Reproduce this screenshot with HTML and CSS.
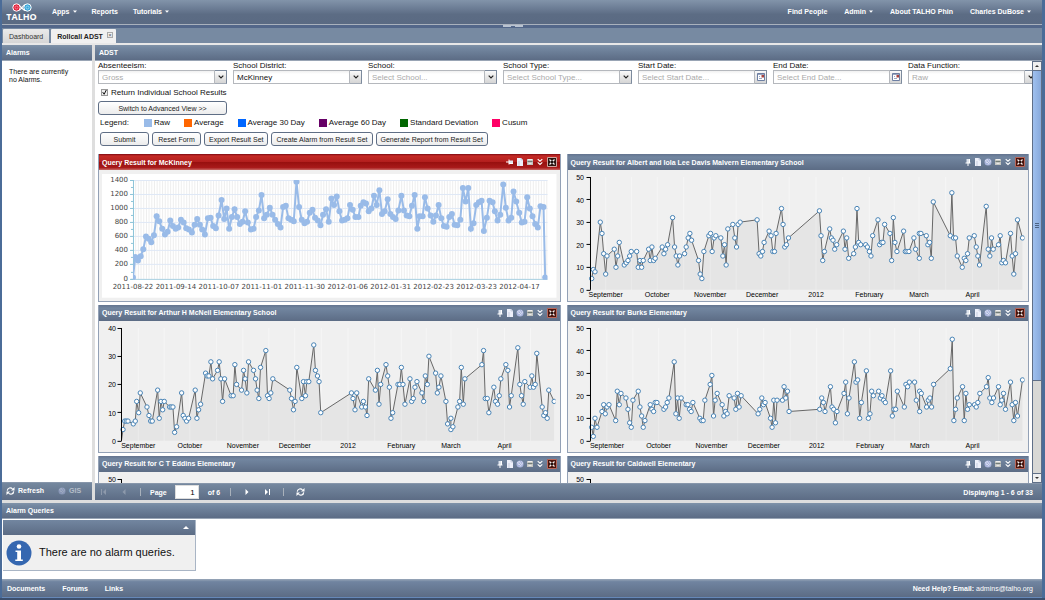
FILE: index.html
```html
<!DOCTYPE html>
<html lang="en">
<head>
<meta charset="utf-8">
<title>TALHO - Rollcall ADST</title>
<link rel="stylesheet" href="styles.css">
</head>
<body>
<svg class="symbols" aria-hidden="true">
  <symbol id="i-pin" viewBox="0 0 8 8"><path d="M2.5 1h3v4h-3z" fill="#dfe5ee"/><path d="M1.500 5h5M4 5v3M5.500 1v4" stroke="#fff" fill="none"/></symbol>
  <symbol id="i-doc" viewBox="0 0 8 8"><path d="M1 0h4l2 2v6H1z" fill="#edf0fa"/><path d="M5 0v2h2M3 3v5" stroke="#b9c2d6" stroke-width=".7" fill="none"/></symbol>
  <symbol id="i-globe" viewBox="0 0 8 8"><circle cx="4" cy="4" r="3.500" fill="#a9b4dc"/><path d="M1.500 2.500l2-1 1 2-1.500 1.500zM5 4.500l2-1M4 6.500l1-1.500M5.500 1.500l1 1" stroke="#e4e8f6" stroke-width=".8" fill="none"/></symbol>
  <symbol id="i-print" viewBox="0 0 8 8"><path d="M1 1h6v6H1z" fill="#c4c6c2"/><path d="M1.500 3.500h5" stroke="#727d78"/><path d="M2.500 5.500h3" stroke="#e8e8e8"/><path d="M2 1.500h4" stroke="#eee"/></symbol>
  <symbol id="i-chev" viewBox="0 0 8 8"><path d="M1.700 1.200L4 3.200l2.300-2M1.700 4.400L4 6.400l2.300-2" stroke="#fff" stroke-width="1.100" fill="none"/></symbol>
  <symbol id="i-close" viewBox="0 0 10 10"><path d="M.5.5h9v9h-9z" fill="#4a140c" stroke="#b9675a"/><path d="M2.500 2.500l5 5M7.500 2.500l-5 5" stroke="#f4f4f4" stroke-width="1.200"/><path d="M4 4h2v2H4z" fill="#1c1210"/></symbol>
  <symbol id="i-close-dark" viewBox="0 0 10 10"><path d="M.5.5h9v9h-9z" fill="#2c1410" stroke="#d0a49e"/><path d="M2.500 2.500l5 5M7.500 2.500l-5 5" stroke="#f4f4f4" stroke-width="1.200"/><path d="M4 4h2v2H4z" fill="#1c1210"/></symbol>
  <symbol id="i-down" viewBox="0 0 6 4"><path d="M.7.6L3 2.900 5.300.6" stroke="#222" stroke-width="1.200" fill="none"/></symbol>
  <symbol id="i-cal" viewBox="0 0 8 8"><path d="M.5.500h7v7h-7z" fill="#fff" stroke="#6d7fa3"/><path d="M.5 1.200h7" stroke="#6d7fa3"/><path d="M2 3.500h1M2 5.500h3" stroke="#9aa8c4"/><path d="M4.500 2h2.500v2.500H4.500z" fill="#a8433e"/></symbol>
  <symbol id="i-refresh" viewBox="0 0 9 8"><path d="M1.300 3.600A2.900 2.900 0 0 1 6.500 2M7.700 4.400A2.900 2.900 0 0 1 2.500 6" stroke="#fff" stroke-width="1.200" fill="none"/><path d="M5 3.400h3.500V0zM4 4.600H.5V8z" fill="#fff"/></symbol>
  <symbol id="i-caret" viewBox="0 0 4 3"><path d="M0 .5h4L2 2.700z" fill="#fff"/></symbol>
</svg>

<div class="app">
  <header class="topbar">
    <a class="logo" href="#" aria-label="TALHO home">
      <svg class="logo-mark" viewBox="0 0 22 9" aria-hidden="true">
        <path d="M7.500 2C9.500 2 11.500 7.500 14.500 7.500M7.500 7.500C10 7.500 12 1.500 14.500 1.500" stroke="#fff" stroke-width="1.100" fill="none"/>
        <circle cx="5.500" cy="4.500" r="3.700" fill="#e0243e" stroke="#fff" stroke-width="1"/><circle cx="5.500" cy="4.500" r="1.500" fill="none" stroke="#ff9aa6" stroke-width=".7"/>
        <circle cx="16.500" cy="4.500" r="3.700" fill="#3ba6d8" stroke="#fff" stroke-width="1"/><circle cx="16.500" cy="4.500" r="1.500" fill="none" stroke="#a6e2ff" stroke-width=".7"/>
      </svg>
      <span class="logo-name">TALHO</span>
    </a>
    <nav class="menu">
      <a href="#">Apps<svg class="caret"><use href="#i-caret"/></svg></a>
      <a href="#">Reports</a>
      <a href="#">Tutorials<svg class="caret"><use href="#i-caret"/></svg></a>
    </nav>
    <nav class="menu menu-right">
      <a href="#">Find People</a>
      <a href="#">Admin<svg class="caret"><use href="#i-caret"/></svg></a>
      <a href="#">About TALHO Phin</a>
      <a href="#">Charles DuBose<svg class="caret"><use href="#i-caret"/></svg></a>
    </nav>
  </header>
  <div class="splitbar"><span class="split-handle"></span></div>
  <div class="tabs">
    <a class="tab" href="#">Dashboard</a>
    <a class="tab tab-active" href="#">Rollcall ADST<span class="tab-close">×</span></a>
  </div>

  <div class="workspace">
    <aside class="panel alarms">
      <h2 class="panel-head">Alarms</h2>
      <p class="alarms-text">There are currently<br>no Alarms.</p>
      <div class="toolbar toolbar-left">
        <button class="tool"><svg class="ico-refresh"><use href="#i-refresh"/></svg>Refresh</button>
        <button class="tool tool-off" disabled><svg class="ico"><use href="#i-globe"/></svg>GIS</button>
      </div>
    </aside>

    <main class="panel adst">
      <h2 class="panel-head">ADST</h2>
      <div class="scroller">
        <div class="content">
          <form class="query">
            <div class="fields">
              <div class="field"><label for="abs">Absenteeism:</label><div class="combo"><select id="abs" class="empty"><option>Gross</option></select><span class="trigger"><svg class="arrow"><use href="#i-down"/></svg></span></div></div>
              <div class="field"><label for="dist">School District:</label><div class="combo"><select id="dist"><option>McKinney</option></select><span class="trigger"><svg class="arrow"><use href="#i-down"/></svg></span></div></div>
              <div class="field"><label for="school">School:</label><div class="combo"><select id="school" class="empty"><option>Select School...</option></select><span class="trigger"><svg class="arrow"><use href="#i-down"/></svg></span></div></div>
              <div class="field"><label for="type">School Type:</label><div class="combo"><select id="type" class="empty"><option>Select School Type...</option></select><span class="trigger"><svg class="arrow"><use href="#i-down"/></svg></span></div></div>
              <div class="field"><label for="start">Start Date:</label><div class="combo"><input id="start" type="text" placeholder="Select Start Date..."><button type="button" class="trigger" aria-label="Pick start date"><svg class="ico"><use href="#i-cal"/></svg></button></div></div>
              <div class="field"><label for="end">End Date:</label><div class="combo"><input id="end" type="text" placeholder="Select End Date..."><button type="button" class="trigger" aria-label="Pick end date"><svg class="ico"><use href="#i-cal"/></svg></button></div></div>
              <div class="field"><label for="func">Data Function:</label><div class="combo"><select id="func" class="empty"><option>Raw</option></select><span class="trigger"><svg class="arrow"><use href="#i-down"/></svg></span></div></div>
            </div>
            <div class="check"><input id="individual" type="checkbox" checked><label for="individual">Return Individual School Results</label></div>
            <button type="button" class="btn btn-wide">Switch to Advanced View &gt;&gt;</button>
            <div class="legend">
              <span class="legend-title">Legend:</span>
              <span class="key"><i class="swatch raw"></i>Raw</span>
              <span class="key"><i class="swatch avg"></i>Average</span>
              <span class="key"><i class="swatch avg30"></i>Average 30 Day</span>
              <span class="key"><i class="swatch avg60"></i>Average 60 Day</span>
              <span class="key"><i class="swatch dev"></i>Standard Deviation</span>
              <span class="key"><i class="swatch cusum"></i>Cusum</span>
            </div>
            <div class="actions">
              <button type="button" class="btn btn-short">Submit</button>
              <button type="button" class="btn btn-short">Reset Form</button>
              <button type="button" class="btn">Export Result Set</button>
              <button type="button" class="btn">Create Alarm from Result Set</button>
              <button type="button" class="btn">Generate Report from Result Set</button>
            </div>
          </form>

          <div class="results">
            <section class="card card-alert"><h3 class="card-head"><span class="card-title">Query Result for McKinney</span></h3><div class="chart" data-chart="mckinney"></div></section>
            <section class="card"><h3 class="card-head"><span class="card-title">Query Result for Albert and Iola Lee Davis Malvern Elementary School</span></h3><div class="chart" data-chart="albert"></div></section>
            <section class="card"><h3 class="card-head"><span class="card-title">Query Result for Arthur H McNeil Elementary School</span></h3><div class="chart" data-chart="arthur"></div></section>
            <section class="card"><h3 class="card-head"><span class="card-title">Query Result for Burks Elementary</span></h3><div class="chart" data-chart="burks"></div></section>
            <section class="card"><h3 class="card-head"><span class="card-title">Query Result for C T Eddins Elementary</span></h3><div class="chart" data-chart="eddins"></div></section>
            <section class="card"><h3 class="card-head"><span class="card-title">Query Result for Caldwell Elementary</span></h3><div class="chart" data-chart="caldwell"></div></section>
          </div>
        </div>
        <div class="scrollbar" aria-hidden="true">
          <span class="sb-btn"><span class="sb-up"></span></span>
          <span class="sb-thumb"><span class="sb-grip"></span></span>
          <span class="sb-track"></span>
          <span class="sb-btn"><span class="sb-down"></span></span>
        </div>
      </div>
      <div class="toolbar paging">
        <button class="page-btn" disabled aria-label="First page"><svg class="ico" viewBox="0 0 8 8"><path d="M1.500 1v6" stroke="#8d99ab"/><path d="M6 1v6L3 4z" fill="#8d99ab"/></svg></button>
        <button class="page-btn" disabled aria-label="Previous page"><svg class="ico" viewBox="0 0 8 8"><path d="M5.500 1v6l-3-3z" fill="#8d99ab"/></svg></button>
        <span class="sep"></span>
        <label class="page-label" for="page">Page</label>
        <input id="page" class="page-input" type="text" value="1">
        <span class="page-of">of 6</span>
        <span class="sep"></span>
        <button class="page-btn" aria-label="Next page"><svg class="ico" viewBox="0 0 8 8"><path d="M2.500 1v6l3-3z" fill="#fff"/></svg></button>
        <button class="page-btn" aria-label="Last page"><svg class="ico" viewBox="0 0 8 8"><path d="M2 1v6l3-3z" fill="#fff"/><path d="M6.500 1v6" stroke="#fff"/></svg></button>
        <span class="sep"></span>
        <button class="page-btn" aria-label="Refresh"><svg class="ico-refresh"><use href="#i-refresh"/></svg></button>
        <span class="page-info">Displaying 1 - 6 of 33</span>
      </div>
    </main>
  </div>

  <section class="queries">
    <h2 class="panel-head">Alarm Queries</h2>
    <div class="queries-body">
      <div class="notice">
        <div class="notice-head"><span class="notice-up"></span></div>
        <div class="notice-body">
          <svg class="info" viewBox="0 0 26 26" aria-hidden="true"><circle cx="13" cy="13" r="12.500" fill="#3567b0"/><circle cx="13" cy="6.500" r="2.300" fill="#fff"/><path d="M9.500 10.500h5.500v9h1.800v1.500H9.300v-1.500h1.900V12H9.500z" fill="#fff"/></svg>
          <span>There are no alarm queries.</span>
        </div>
      </div>
    </div>
  </section>

  <footer class="footer">
    <a href="#">Documents</a>
    <a href="#">Forums</a>
    <a href="#">Links</a>
    <span class="help">Need Help? Email: <a class="mail" href="mailto:admins@talho.org">admins@talho.org</a></span>
  </footer>
</div>
<script src="charts.js"></script>
</body>
</html>
```
FILE: styles.css
```css
* { box-sizing: border-box; }
html, body { height: 100%; }
body {
  margin: 0;
  font: 7px/9px "Liberation Sans", Arial, sans-serif;
  color: #111;
  background: #4b6c98;
  overflow: hidden;
}
h2, h3, p { margin: 0; font-size: inherit; }
a { color: inherit; text-decoration: none; }
button, input, select { font: inherit; margin: 0; }
svg { display: block; flex: none; }
.symbols { position: absolute; width: 0; height: 0; }

.app {
  display: flex;
  flex-direction: column;
  height: 100vh;
  padding: 0 3px 0 2px;
  border-bottom: 2px solid #3c4f6d;
}

.topbar {
  display: flex;
  align-items: center;
  height: 25px;
  flex: none;
  padding: 0 11px 0 4px;
  color: #fff;
  font-weight: bold;
  background: linear-gradient(#8294aa, #6f8098 30%, #5c6c84 60%, #5a6a83);
  border-bottom: 1px solid #a9b1bd;
}
.logo { display: flex; flex-direction: column; align-items: center; width: 31px; margin-right: 15px; }
.logo-mark { width: 22px; height: 9px; }
.logo-name { font: bold 9px/9px "Open Sans", sans-serif; }
.menu { display: flex; gap: 15px; padding-bottom: 2px; }
.menu a { display: flex; align-items: center; }
.menu-right { margin-left: auto; gap: 17px; }
.caret { width: 4px; height: 3px; margin-left: 3px; }

.splitbar { display: flex; justify-content: center; height: 3px; flex: none; background: #53678a; }
.split-handle { width: 20px; height: 2px; margin-right: 18px; border: solid #b9c3d1; border-width: 1px 8px 0; background: #53678a; }

.tabs {
  display: flex;
  align-items: flex-end;
  gap: 2px;
  height: 17px;
  flex: none;
  padding: 0 1px;
  background: #778aa2;
  border-bottom: 2px solid #e8e8e8;
}
.tab {
  display: flex;
  align-items: center;
  height: 14px;
  padding: 0 6px;
  color: #333;
  background: linear-gradient(#eaeaea, #d6d6d6);
  border-radius: 1px 1px 0 0;
}
.tab-active { color: #222; font-weight: bold; background: #f0f0f0; padding-right: 3px; }
.tab-close {
  width: 6px; height: 6px; margin: 0 0 2px 4px;
  border: 1px solid #aaa;
  font: 6px/4px "Liberation Sans", sans-serif;
  text-align: center;
  color: #555;
}

.workspace { display: flex; flex: 1; min-height: 0; gap: 3px; background: #dedede; }
.panel { display: flex; flex-direction: column; background: #fff; }
.panel-head {
  flex: none;
  height: 16px;
  padding: 0 4px;
  line-height: 15px;
  font-weight: bold;
  color: #fff;
  background: linear-gradient(#8093a9, #7387a0 20%, #5c6c85);
  border-bottom: 1px solid #99a5b5;
}
.alarms { width: 90px; flex: none; }
.alarms-text { flex: 1; padding: 7px; line-height: 8px; }
.toolbar {
  display: flex;
  align-items: center;
  flex: none;
  height: 17px;
  color: #fff;
  font-weight: bold;
  background: linear-gradient(#75889f, #5c6c85);
  border-top: 1px solid #8796aa;
}
.toolbar-left { height: 18px; padding-bottom: 2px; }
.tool { display: flex; align-items: center; gap: 3px; padding: 0 4px; border: 0; background: none; color: #fff; font-weight: bold; }
.tool-off { padding-left: 10px; opacity: .5; }
.ico { width: 8px; height: 8px; }
.ico-refresh { width: 9px; height: 8px; }

.adst { flex: 1; min-width: 0; }
.scroller { display: flex; flex: 1; min-height: 0; }
.content { flex: 1; min-width: 0; overflow: hidden; padding: 0 3px; }

.query { font-size: 8px; margin-right: -3px; }
.fields { display: grid; grid-template-columns: repeat(7, 129px); gap: 6px; }
.field label { display: block; height: 9px; }
.combo { display: flex; height: 14px; }
.combo select, .combo input {
  appearance: none;
  flex: 1;
  min-width: 0;
  height: 14px;
  padding: 0 3px;
  border: 1px solid #b5b8bd;
  border-radius: 0;
  background: linear-gradient(#f0f0f0, #fff 3px);
  color: #111;
}
.combo .empty, .combo input::placeholder { color: #aaa; }
.trigger {
  display: flex;
  align-items: center;
  justify-content: center;
  width: 12px;
  flex: none;
  padding: 0;
  border: 1px solid #7c8a9d;
  border-left: 0;
  border-bottom-color: #a3abb6;
  background: linear-gradient(#fafafa, #d5d5d5);
}
.arrow { width: 6px; height: 4px; }

.check { display: flex; align-items: center; gap: 3px; height: 10px; margin: 3px 0 4px 3px; }
.check input {
  appearance: none;
  width: 7px;
  height: 7px;
  border: 1px solid #999;
  background: url("data:image/svg+xml,%3Csvg xmlns='http://www.w3.org/2000/svg' viewBox='0 0 7 7'%3E%3Cpath d='M1 3l2 3L6 0' stroke='%23111' stroke-width='1.400' fill='none'/%3E%3C/svg%3E") center / 100% no-repeat #eee;
}

.btn {
  height: 14px;
  padding: 0 4px;
  font-size: 7px;
  line-height: 11px;
  color: #222;
  border: 1px solid #5f6e85;
  border-radius: 3px;
  background: linear-gradient(#fff, #ececec);
}
.btn-wide { display: block; width: 129px; }
.btn-short { width: 49px; }
.legend { display: flex; align-items: center; gap: 14px; height: 9px; margin: 3px 0 5px 2px; }
.legend-title { margin-right: 1px; }
.key { display: flex; align-items: center; gap: 2px; }
.swatch { width: 8px; height: 8px; }
.raw { background: #99bbe8; }
.avg { background: #ff6600; }
.avg30 { background: #0066ff; }
.avg60 { background: #660066; }
.dev { background: #006600; }
.cusum { background: #ff0066; }
.actions { display: flex; gap: 3px; margin: 0 0 8px 2px; }

.results { display: grid; grid-template-columns: 1fr 1fr; gap: 3px 6px; }
.card { min-width: 0; border: 1px solid #93a1b6; border-top: 0; background: #f0f0f0; }
.card-head {
  display: flex;
  align-items: center;
  gap: 2px;
  height: 16px;
  padding: 0 3px;
  color: #fff;
  font-weight: bold;
  background: linear-gradient(#63748f, #7286a0 20%, #5c6c85);
}
.card-title { flex: 1; }
.card-alert .card-head { background: linear-gradient(#7d0a12, #c42a25 12%, #b31f1e 48%, #98100f 52%, #a81a1a 85%, #c96a66); }
.icon-btn { width: 8px; height: 8px; padding: 0; border: 0; background: none; }
.icon-btn svg { width: 100%; height: 100%; }
.icon-close { width: 10px; height: 10px; margin-left: 1px; }
.icon-pinned svg { transform: rotate(90deg); }
.chart svg { width: 100%; height: auto; }
.axis-text { font: 7px "Liberation Sans", Arial, sans-serif; fill: #000; }
.flot-text { font: 7px "DejaVu Sans", sans-serif; fill: #444; }

.scrollbar { display: flex; flex-direction: column; width: 10px; flex: none; border: solid #5f6f87; border-width: 0 1px; background: #d8d8d5; }
.sb-btn { display: flex; align-items: center; justify-content: center; height: 10px; border: solid #5f6f87; border-width: 1px 0; background: #f0f0f0; }
.sb-up, .sb-down { border: solid transparent; border-width: 0 2px; }
.sb-up { border-bottom: 2px solid #333; }
.sb-down { border-top: 2px solid #333; }
.sb-thumb { display: flex; align-items: center; justify-content: center; flex: 77; background: linear-gradient(90deg, #9fc0ee, #87a9db); }
.sb-grip { width: 4px; height: 5px; background: repeating-linear-gradient(#4c6384 0 1px, transparent 1px 2px); }
.sb-track { flex: 23; border-top: 1px solid #5f6f87; }

.paging { padding: 0 9px 0 5px; }
.page-btn { display: flex; padding: 0; margin-right: 12px; border: 0; background: none; }
.sep { width: 1px; height: 8px; margin-right: 9px; background: #a9b1bb; }
.page-label { margin-right: 8px; }
.page-input { width: 24px; height: 14px; padding: 0 3px; border: 1px solid #ddd; font-size: 8px; font-weight: normal; text-align: right; background: #fff; }
.page-of { margin: 0 10px 0 9px; }
.page-info { margin-left: auto; }
.sep + .page-btn { margin-left: 3px; }

.queries { flex: none; padding-top: 3px; background: #dedede; }
.queries-body { min-height: 60px; padding: 1px; background: #fff; }
.notice { width: 193px; border: solid #a9b5c5; border-width: 0 1px 1px 0; background: #f0f0f0; }
.notice-head { display: flex; align-items: center; justify-content: flex-end; height: 15px; padding: 0 6px; background: linear-gradient(#7286a0, #5c6c85); }
.notice-up { border: solid transparent; border-width: 0 3px 3px; border-bottom-color: #fff; }
.notice-body { display: flex; align-items: center; gap: 7px; height: 35px; padding: 0 3px; font-size: 11px; }
.info { width: 26px; height: 26px; }

.footer {
  display: flex;
  align-items: center;
  gap: 17px;
  flex: none;
  height: 19px;
  padding: 0 9px 0 5px;
  color: #fff;
  font-weight: bold;
  background: linear-gradient(#9aa8b9, #7084a0 15%, #5c6c85);
  border-bottom: 1px solid #6688b8;
}
.help { margin-left: auto; }
.mail { font-weight: normal; }
```
FILE: charts.js
```js
// Readings are "x,value" pairs; x counts plot units, three to a pixel.
// The spring term starts its own count at springFrom.
const AXIS = { top: 7, bottom: 120 };

const schools = {
  albert: {
    left: 3, axis: 22, max: 50, springFrom: 720,
    months: [122, 277, 436, 592, 754, 914, 1063, 1224],
    autumn: "80,5 85,9 90,8 106,30 111,25 116,16 122,7 126,15 148,18 153,10 158,15 163,21 178,11 184,12 189,13 194,15 199,17 215,17 220,10 225,13 230,10 235,13 251,18 256,13 261,19 266,13 271,14 292,19 297,16 302,18 308,20 323,32 329,19 334,15 339,11 344,15 359,16 364,19 370,23 375,25 380,22 401,13 406,7 411,5 417,17 432,24 437,25 442,17 448,23 453,24 468,23 474,15 479,20 484,11 489,27 504,29 510,23 515,19 520,29 526,30 577,31 583,16 588,15 593,17 598,21 613,26 619,24 624,17 629,17 634,25 650,36 655,29 660,19 665,20 671,23",
    spring: "44,35 49,24 54,13 59,17 75,27 80,23 85,22 90,18 96,20 116,26 121,18 126,23 132,14 147,16 152,19 157,36 162,21 168,20 183,20 188,19 194,17 199,15 204,24 220,31 225,20 230,21 235,21 240,29 256,25 261,13 266,32 271,21 277,17 297,26 302,17 307,17 313,17 328,23 333,18 344,14 344,25 349,25 365,24 370,20 375,21 380,14 386,39 437,24 442,43 447,23 453,23 458,15 473,10 479,14 484,13 489,16 494,23 509,24 515,19 520,15 525,11 545,37 551,18 556,15 561,23 566,18 582,20 587,24 592,12 597,13 603,12 618,25 623,15 628,7 633,16 639,31 654,23"
  },
  arthur: {
    left: 4, axis: 22, max: 40, springFrom: 705,
    months: [130, 285, 444, 600, 760, 920, 1069, 1230],
    autumn: "84,4 89,7 94,7 99,7 115,6 121,7 125,14 131,10 136,17 156,12 162,9 167,7 172,7 188,18 193,8 198,14 203,11 208,14 224,12 229,12 234,12 239,3 245,5 260,17 265,9 270,8 275,7 281,8 301,18 306,8 311,11 317,13 332,24 337,23 342,23 348,28 353,22 368,25 373,28 378,22 383,14 389,22 409,16 415,16 420,27 425,20 440,18 446,25 451,22 456,17 461,28 476,25 482,22 487,18 492,15 497,26 513,32 518,16 523,15 528,17 534,22 585,18 590,15 596,11 601,14 606,26 621,15 626,21 632,16 636,21 642,21 657,34 662,25 668,23 673,21 678,10",
    spring: "65,17 70,15 76,11 81,17 96,12 101,14 107,12 112,9 117,22 137,18 143,25 148,13 153,20 169,27 174,23 179,19 184,8 189,10 205,20 210,20 215,26 220,20 226,13 241,22 246,14 251,15 256,19 262,21 277,17 282,14 287,23 293,20 298,30 318,24 323,17 328,19 334,23 349,14 354,6 364,8 364,4 370,5 385,12 390,14 395,26 401,13 406,22 457,27 462,32 467,15 473,15 478,10 493,19 498,14 504,13 509,16 514,22 529,27 535,25 540,12 545,16 565,33 571,20 576,16 581,13 586,21 602,19 607,23 612,19 617,20 622,31 638,12 643,9 648,10 653,8 658,18 674,14"
  },
  burks: {
    left: 3, axis: 22, max: 50, springFrom: 720,
    months: [126, 281, 440, 597, 756, 916, 1065, 1224],
    autumn: "80,6 85,2 90,10 96,6 111,13 116,16 121,12 126,15 132,16 152,9 157,22 163,16 168,21 183,19 189,14 194,8 199,6 204,18 220,22 225,15 230,11 235,6 240,9 256,16 261,14 266,13 271,17 276,17 297,14 302,15 307,17 312,19 328,35 333,12 338,19 343,10 349,19 364,16 369,16 374,14 379,13 384,17 405,10 410,9 415,9 420,18 436,25 441,29 446,11 451,18 457,21 472,16 477,11 482,13 487,12 493,20 508,19 513,14 518,21 523,15 529,20 580,12 585,14 591,19 596,16 601,17 617,10 622,6 627,18 632,8 637,18 653,18 658,24 663,19 668,22 673,13",
    spring: "45,14 51,19 56,17 61,13 77,24 82,15 87,14 92,8 97,13 118,21 123,26 128,12 133,19 149,35 154,26 159,27 165,10 170,17 185,31 191,10 196,12 201,22 206,20 222,22 227,19 232,20 237,18 242,17 258,31 263,11 268,14 273,14 278,22 299,15 304,25 309,24 314,26 330,26 335,18 345,13 345,22 350,21 366,15 371,18 376,19 381,15 387,25 437,32 443,45 448,9 453,14 458,19 474,24 479,9 484,21 489,14 494,16 510,16 515,15 520,17 526,21 546,24 551,28 556,19 562,17 567,19 582,24 587,16 592,18 597,21 603,14 618,26 623,16 628,9 633,17 639,11 654,27"
  },
  eddins: { left: 4, axis: 22, max: 50, springFrom: 705, months: [], autumn: "", spring: "" },
  caldwell: { left: 3, axis: 22, max: 50, springFrom: 720, months: [], autumn: "", spring: "" }
};

// District totals, in tens of pupils.
const district = {
  left: 4, springFrom: 705,
  autumn: "114,2 121,31 129,26 137,32 145,42 153,60 161,57 169,52 177,62 185,89 193,82 202,71 210,63 218,67 226,83 234,75 242,71 250,73 258,84 266,80 274,72 282,70 291,66 299,77 307,85 315,77 322,70 330,63 339,86 347,87 355,75 363,72 371,90 380,112 388,85 395,100 403,71 411,88 419,99 427,88 435,78 443,81 451,96 459,80 468,70 476,71 484,88 492,97 500,119 508,86 516,91 525,101 533,91 541,84 549,78 557,73 565,102 573,104 581,86 589,84 597,82 605,138 613,102 621,84 629,79 637,81 645,94 653,98 661,87 669,83 677,76 685,91 694,99 702,81 710,114 718,105",
  spring: "21,117 29,96 37,83 45,84 53,86 61,105 69,98 77,88 86,88 93,104 101,109 109,107 117,96 125,100 133,118 141,105 149,126 157,92 165,96 174,113 182,92 190,88 198,85 206,97 215,118 223,97 231,90 239,89 247,104 255,119 263,71 270,89 279,89 286,116 294,100 303,90 311,81 319,90 327,105 335,86 343,75 351,74 359,88 367,92 375,77 383,76 392,84 400,129 408,110 416,129 424,71 432,79 440,105 448,109 456,111 463,68 472,87 480,111 489,109 496,96 504,83 512,91 521,134 529,101 537,83 545,87 552,124 560,110 569,94 577,80 585,81 593,116 601,100 609,89 617,78 625,73 633,103 642,102 647,2",
  dates: ["2011-08-22", "2011-09-14", "2011-10-07", "2011-11-01", "2011-11-30", "2012-01-06", "2012-01-31", "2012-02-23", "2012-03-23", "2012-04-17"]
};

const MONTHS = ["September", "October", "November", "December", "2012", "February", "March", "April"];

function readings(chart, toY) {
  const parse = (text, shift) => text.split(" ").filter(Boolean).map(pair => {
    const [x, v] = pair.split(",").map(Number);
    return [+((x + shift) / 3 - chart.left).toFixed(1), +toY(v).toFixed(1)];
  });
  return [...parse(chart.autumn, 0), ...parse(chart.spring, chart.springFrom)];
}

function schoolChart(name) {
  const c = schools[name];
  const toY = v => AXIS.bottom - v * (AXIS.bottom - AXIS.top) / c.max;
  const pts = readings(c, toY);
  const axisX = c.axis + 0.5;
  const labelX = c.left === 4 ? 17 : 16;
  let out = "";
  c.months.forEach((m, i) => {
    const x = m / 3 - c.left;
    const next = i < 7 ? (c.months[i + 1] - m) / 6 : 26;
    out += `<path d="M${x} 7V120M${x + next} 7V120" stroke="#f6f6f6"/>`;
  });
  if (pts.length) {
    const line = pts.map(p => p.join(" ")).join("L");
    out += `<path d="M${pts[0][0]} 120L${line}V120Z" fill="#000" fill-opacity=".045"/>`;
    const lead = name === "arthur" ? `M${axisX} 120L` : "M";
    out += `<path d="${lead}${line}" fill="none" stroke="#666"/>`;
    out += pts.map(p => `<circle cx="${p[0]}" cy="${p[1]}" r="2.200" fill="#fff" stroke="#4682b4"/>`).join("");
  }
  let axis = `<path d="M${axisX} 7V120" stroke="#000"/>`;
  // A chart still waiting for its readings shows only the top of its scale.
  for (let v = pts.length ? 0 : c.max; v <= c.max; v += 10) {
    const y = toY(v);
    const snap = Math.floor(y) + 0.5;
    axis += `<path d="M${axisX - 4} ${snap}H${axisX}" stroke="#000"/>`;
    axis += `<text class="axis-text" x="${labelX}" y="${y + 3}" text-anchor="end">${v}</text>`;
  }
  c.months.forEach((m, i) => {
    axis += `<text class="axis-text" x="${m / 3 - c.left}" y="127" text-anchor="middle">${MONTHS[i]}</text>`;
  });
  return `<svg viewBox="0 0 461 131"><clipPath id="clip-${name}"><path d="M0 0H457V131H0z"/></clipPath><g clip-path="url(#clip-${name})">${out}</g>${axis}</svg>`;
}

function districtChart() {
  const toY = v => 109 - v * 98.700 / 140;
  const pts = readings(district, toY);
  let out = `<path d="M3 4H458V128H3z" fill="#fff"/>`;
  for (let x = 36.700; x < 449; x += 2.690) out += `<path d="M${x.toFixed(1)} 10V109" stroke="#ececec" stroke-width=".9"/>`;
  for (let v = 0; v <= 140; v += 20) {
    const y = Math.floor(toY(v)) + 0.5;
    out += `<path d="M32 ${y}H449" stroke="${v ? "#dfe8f6" : "#a6cfe0"}"/>`;
    out += `<path d="M31 ${y}H34" stroke="#8cc4d8"/><text class="flot-text" x="29" y="${y + 2}" text-anchor="end">${v * 10}</text>`;
    if (v < 140) out += `<path d="M32 ${y - 7}H34" stroke="#8cc4d8"/>`;
  }
  out += `<path d="M34.500 10V109" stroke="#8cc4d8"/>`;
  out += `<g clip-path="url(#clip-district)"><path d="M${pts.map(p => p.join(" ")).join("L")}" fill="none" stroke="#99bbe8" stroke-width="2"/>`;
  out += pts.map(p => `<circle cx="${p[0]}" cy="${p[1]}" r="3" fill="#99bbe8"/>`).join("") + "</g>";
  district.dates.forEach((d, i) => {
    out += `<text class="flot-text" x="${34 + i * 43}" y="119" text-anchor="middle">${d}</text>`;
  });
  return `<svg viewBox="0 0 461 131"><clipPath id="clip-district"><path d="M34 10H449V110H34z"/></clipPath>${out}</svg>`;
}

document.querySelectorAll("[data-chart]").forEach(el => {
  const name = el.dataset.chart;
  el.innerHTML = name === "mckinney" ? districtChart() : schoolChart(name);
});

const button = (icon, label, cls = "") =>
  `<button class="icon-btn ${cls}" aria-label="${label}"><svg><use href="#i-${icon}"/></svg></button>`;

document.querySelectorAll(".card").forEach(card => {
  const alert = card.classList.contains("card-alert");
  card.querySelector(".card-head").insertAdjacentHTML("beforeend",
    button("pin", "Pin", alert ? "icon-pinned" : "") + button("doc", "Export") +
    (alert ? "" : button("globe", "Map")) + button("print", "Print") +
    button("chev", "Collapse") + button(alert ? "close-dark" : "close", "Close", "icon-close"));
});
```
